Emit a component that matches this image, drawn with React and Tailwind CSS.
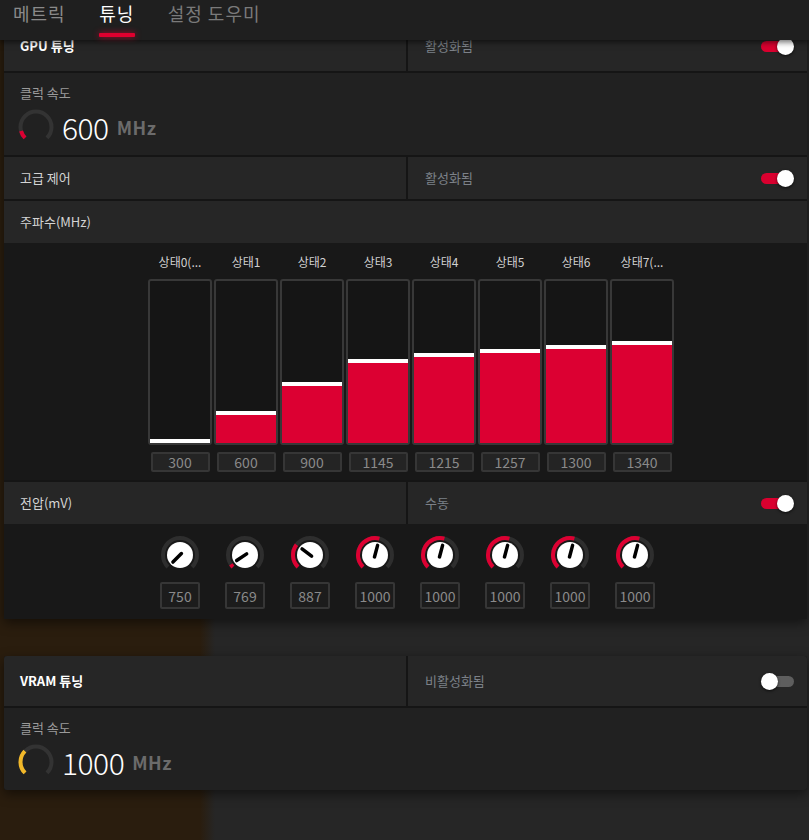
import React from 'react';

const FONT = "font-['Noto_Sans_CJK_KR','Noto_Sans',sans-serif]";
const RED = '#dc0032';

const polar = (cx, cy, r, deg) => {
    const a = (deg * Math.PI) / 180;
    return [cx + r * Math.sin(a), cy - r * Math.cos(a)];
};

// arc measured clockwise from north, in degrees
const arc = (cx, cy, r, from, to) => {
    const [x0, y0] = polar(cx, cy, r, from);
    const [x1, y1] = polar(cx, cy, r, to);
    const large = to - from > 180 ? 1 : 0;
    return `M ${x0} ${y0} A ${r} ${r} 0 ${large} 1 ${x1} ${y1}`;
};

const freqStates = [
    { label: '상태0(...', value: 300 },
    { label: '상태1', value: 600 },
    { label: '상태2', value: 900 },
    { label: '상태3', value: 1145 },
    { label: '상태4', value: 1215 },
    { label: '상태5', value: 1257 },
    { label: '상태6', value: 1300 },
    { label: '상태7(...', value: 1340 },
];

const voltages = [750, 769, 887, 1000, 1000, 1000, 1000, 1000];

const Gauge = ({ frac, color }) => (
    <svg width="36" height="36" viewBox="0 0 36 36">
        <path d={arc(18, 18, 15.5, 225, 495)} fill="none" stroke="#333333" strokeWidth="4" />
        <path d={arc(18, 18, 15.5, 225, 225 + 270 * frac)} fill="none" stroke={color} strokeWidth="4" />
    </svg>
);

const Knob = ({ value }) => {
    const end = 225 + 270 * ((value - 750) / 450);
    const [ax, ay] = polar(20, 20, -2, end);
    const [bx, by] = polar(20, 20, 10, end);
    return (
        <svg width="40" height="40" viewBox="0 0 40 40">
            <path d={arc(20, 20, 17, 225, 495)} fill="none" stroke="#2e2e2e" strokeWidth="4" />
            {value > 750 && (
                <path d={arc(20, 20, 17, 225, end)} fill="none" stroke={RED} strokeWidth="4" />
            )}
            <circle cx="20" cy="20" r="13" fill="#ffffff" />
            <line x1={ax} y1={ay} x2={bx} y2={by} stroke="#000000" strokeWidth="3.5" strokeLinecap="round" />
        </svg>
    );
};

const Toggle = ({ on }) => (
    <div className="relative w-[33px] h-[17px] flex items-center">
        {on ? (
            <div className="w-[30px] h-[11px] rounded-full bg-[#d9002f]" />
        ) : (
            <div className="ml-[3px] w-[30px] h-[11px] rounded-full bg-[#5e5e5e]" />
        )}
        <div className={on
            ? "absolute top-0 right-0 w-[17px] h-[17px] rounded-full bg-white shadow-[0_1px_3px_rgba(0,0,0,0.7)]"
            : "absolute top-0 left-0 w-[17px] h-[17px] rounded-full bg-white shadow-[0_1px_3px_rgba(0,0,0,0.7)]"} />
    </div>
);

const SplitRow = ({ height, left, right, on }) => (
    <div className={`flex ${height}`}>
        <div className="w-[402px] bg-[#262626] pl-[16px] flex items-center">{left}</div>
        <div className="w-[2px] bg-[#151515]" />
        <div className="flex-1 bg-[#262626] pl-[17px] pr-[13px] flex items-center justify-between">
            <span className="text-[13px] text-[#7c8188]">{right}</span>
            <Toggle on={on} />
        </div>
    </div>
);

const Line = () => <div className="h-[2px] bg-[#151515]" />;

const ClockRow = ({ value, frac, color }) => (
    <div className="h-[82px] bg-[#212121] pl-[16px] pt-[11px]">
        <div className="text-[13px] leading-[18px] text-[#9a9a9a]">클럭 속도</div>
        <div className="mt-[7px] -ml-[2px] flex items-center">
            <Gauge frac={frac} color={color} />
            <span className="ml-[8px] text-[30px] font-light leading-[36px] tracking-[-0.5px] text-white">{value}</span>
            <span className="ml-[8px] text-[18px] font-bold tracking-[0.5px] text-[#6b6b6b]">MHz</span>
        </div>
    </div>
);

const App = () => {
    return (
        <div className={`${FONT} relative w-full min-h-[840px] overflow-hidden bg-[linear-gradient(90deg,#2a1d0e_0px,#2a1d0e_200px,#262626_215px)]`}>
            {/* tab bar overlays the scrolled content */}
            <div className="absolute top-0 left-0 right-0 h-[40px] z-10 bg-[#1f1f1f] shadow-[0_2px_6px_rgba(0,0,0,0.6)] flex items-start pl-[13px] gap-[33px]">
                <div className="text-[18px] leading-[26px] tracking-[1px] text-[#8a8a8a]">메트릭</div>
                <div className="flex flex-col items-center">
                    <div className="text-[18px] leading-[26px] tracking-[1px] text-white">튜닝</div>
                    <div className="mt-[7px] w-[36px] h-[4px] rounded-[1px] bg-[#e0002f] shadow-[0_0_6px_rgba(224,0,47,0.8)]" />
                </div>
                <div className="text-[18px] leading-[26px] tracking-[1px] text-[#7a7a7a]">설정 도우미</div>
            </div>

            <div className="pt-[21px] pl-[4px] pr-[2px] flex flex-col">
                {/* GPU card */}
                <div className="flex flex-col bg-[#151515] rounded-b-[3px] shadow-[0_4px_12px_rgba(0,0,0,0.5)]">
                    <SplitRow
                        height="h-[50px]"
                        left={<span className="text-[13px] font-bold text-white">GPU 튜닝</span>}
                        right="활성화됨"
                        on
                    />
                    <Line />
                    <ClockRow value="600" frac={0.11} color={RED} />
                    <Line />
                    <SplitRow
                        height="h-[42px]"
                        left={<span className="text-[13px] text-[#d4d4d4]">고급 제어</span>}
                        right="활성화됨"
                        on
                    />
                    <Line />
                    <div className="h-[42px] bg-[#262626] pl-[16px] flex items-center">
                        <span className="text-[13px] text-[#d4d4d4]">주파수(MHz)</span>
                    </div>
                    <div className="h-[237px] bg-[#181818] pt-[11px] pl-[11px] flex justify-center gap-[2px]">
                        {freqStates.map((s, i) => (
                            <div key={i} className="w-[64px] flex flex-col items-center">
                                <div className="h-[16px] text-[12px] leading-[16px] text-[#d0d0d0]">{s.label}</div>
                                <div className="mt-[9px] w-[64px] h-[166px] border-2 border-[#383838] rounded-[3px] bg-[#151515] flex flex-col justify-end">
                                    <div
                                        className="border-t-4 border-white bg-[#dc0032]"
                                        style={{ height: (s.value - 300) / 10.6 + 4 }}
                                    />
                                </div>
                                <div className="mt-[7px] w-[59px] h-[20px] border-2 border-[#363636] rounded-[2px] bg-[#242424] flex items-center justify-center text-[14px] leading-none text-[#8a8a8a]">
                                    {s.value}
                                </div>
                            </div>
                        ))}
                    </div>
                    <Line />
                    <SplitRow
                        height="h-[42px]"
                        left={<span className="text-[13px] text-[#d4d4d4]">전압(mV)</span>}
                        right="수동"
                        on
                    />
                    <div className="h-[95px] bg-[#181818] pt-[11px] pl-[4px] flex justify-center gap-[25px]">
                        {voltages.map((v, i) => (
                            <div key={i} className="w-[40px] flex flex-col items-center">
                                <Knob value={v} />
                                <div className="mt-[7px] w-[40px] h-[27px] border-2 border-[#363636] rounded-[2px] bg-[#1c1c1c] flex items-center justify-center text-[14px] leading-none text-[#8a8a8a]">
                                    {v}
                                </div>
                            </div>
                        ))}
                    </div>
                </div>

                {/* VRAM card */}
                <div className="mt-[37px] flex flex-col bg-[#151515] rounded-[3px] overflow-hidden shadow-[0_4px_12px_rgba(0,0,0,0.5)]">
                    <SplitRow
                        height="h-[50px]"
                        left={<span className="text-[13px] font-bold text-white">VRAM 튜닝</span>}
                        right="비활성화됨"
                        on={false}
                    />
                    <Line />
                    <ClockRow value="1000" frac={0.33} color="#f2b829" />
                </div>
            </div>
        </div>
    );
};

export default App;
